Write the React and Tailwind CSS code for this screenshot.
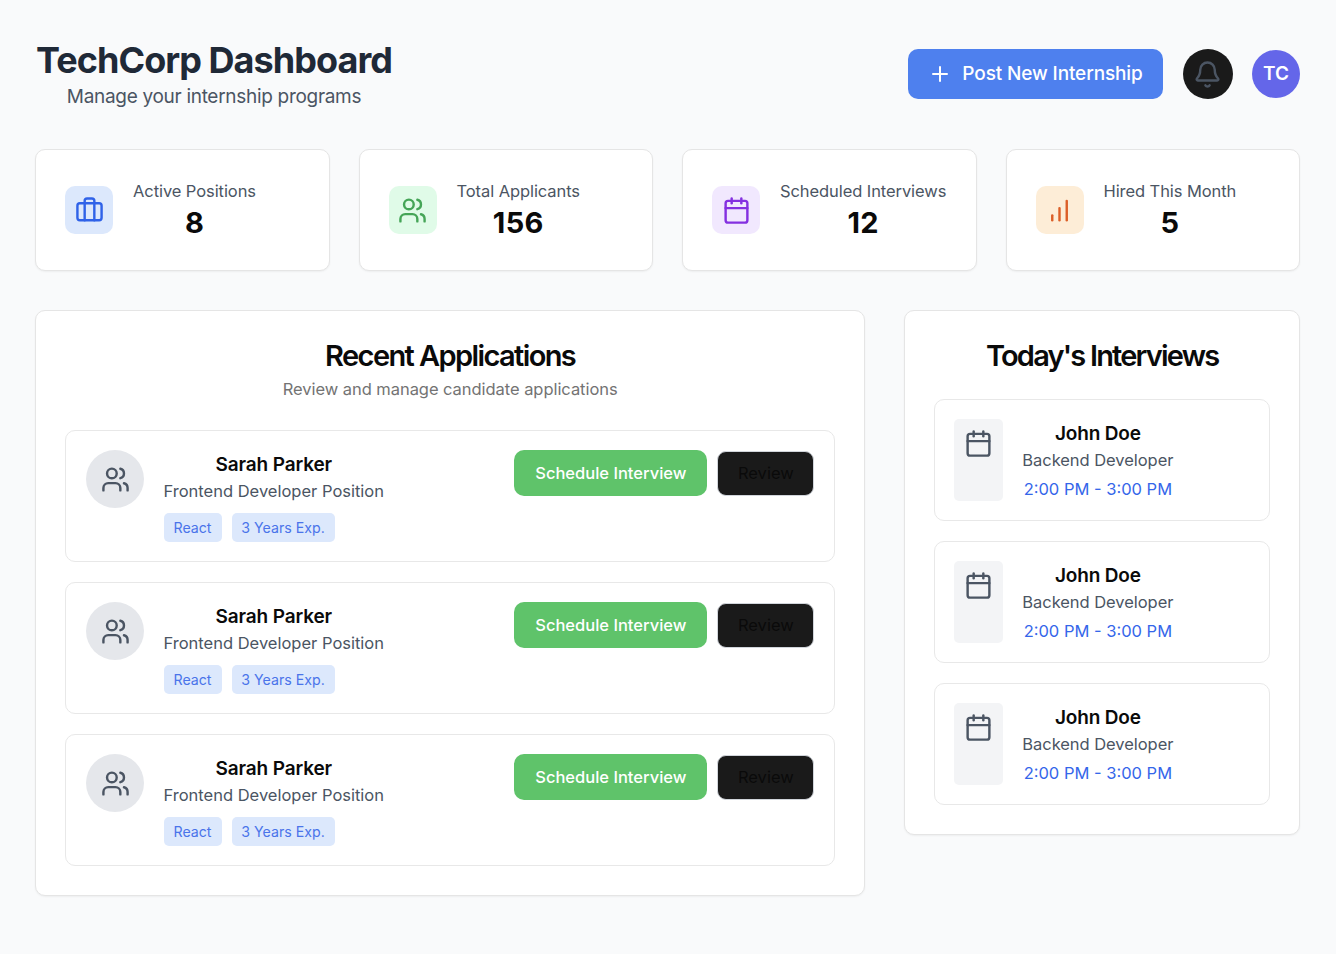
const base = {
  viewBox: '0 0 24 24',
  fill: 'none',
  stroke: 'currentColor',
  strokeWidth: 2,
  strokeLinecap: 'round',
  strokeLinejoin: 'round',
};

const Icon = ({ className, children }) => (
  <svg {...base} className={`shrink-0 ${className}`}>{children}</svg>
);

const Briefcase = (p) => (
  <Icon {...p}>
    <path d="M16 20V4a2 2 0 0 0-2-2h-4a2 2 0 0 0-2 2v16" />
    <rect width="20" height="14" x="2" y="6" rx="2" />
  </Icon>
);
const Users = (p) => (
  <Icon {...p}>
    <path d="M16 21v-2a4 4 0 0 0-4-4H6a4 4 0 0 0-4 4v2" />
    <circle cx="9" cy="7" r="4" />
    <path d="M22 21v-2a4 4 0 0 0-3-3.87" />
    <path d="M16 3.13a4 4 0 0 1 0 7.75" />
  </Icon>
);
const Calendar = (p) => (
  <Icon {...p}>
    <path d="M8 2v4" />
    <path d="M16 2v4" />
    <rect width="18" height="18" x="3" y="4" rx="2" />
    <path d="M3 10h18" />
  </Icon>
);
const Bars = (p) => (
  <Icon {...p}>
    <path d="M12 20V10" />
    <path d="M18 20V4" />
    <path d="M6 20v-4" />
  </Icon>
);
const Bell = (p) => (
  <Icon {...p}>
    <path d="M10.268 21a2 2 0 0 0 3.464 0" />
    <path d="M3.262 15.326A1 1 0 0 0 4 17h16a1 1 0 0 0 .74-1.673C19.41 13.956 18 12.499 18 8A6 6 0 0 0 6 8c0 4.499-1.411 5.956-2.738 7.326" />
  </Icon>
);
const Plus = (p) => (
  <Icon {...p}>
    <path d="M5 12h14" />
    <path d="M12 5v14" />
  </Icon>
);

const stats = [
  { label: 'Active Positions', value: '8', icon: Briefcase, box: 'bg-[#dce8fc] text-[#2f62e8]' },
  { label: 'Total Applicants', value: '156', icon: Users, box: 'bg-[#e0fbe8] text-[#45a557]' },
  { label: 'Scheduled Interviews', value: '12', icon: Calendar, box: 'bg-[#f1e8fe] text-[#8430e0]' },
  { label: 'Hired This Month', value: '5', icon: Bars, box: 'bg-[#fdedd7] text-[#dc5f28]' },
];

function StatCard({ label, value, icon: Glyph, box }) {
  return (
    <div className="flex h-[122px] items-center gap-[20px] rounded-[10px] border border-[#e5e5e5] bg-white px-[29px] shadow-xs">
      <div className={`flex size-[48px] shrink-0 items-center justify-center rounded-[10px] ${box}`}>
        <Glyph className="size-[29px]" />
      </div>
      <div className="text-center whitespace-nowrap">
        <p className="text-[16.5px] leading-[24px] tracking-[-0.08px] text-[#4b5563]">{label}</p>
        <p className="text-[29px] leading-[39px] font-bold tracking-[0.3px] text-[#0a0a0a]">{value}</p>
      </div>
    </div>
  );
}

function Application() {
  return (
    <div className="flex h-[132px] items-start gap-[19.5px] rounded-[10px] border border-[#e8e8e8] px-[20px] pt-[19px]">
      <div className="flex size-[58px] shrink-0 items-center justify-center rounded-full bg-[#e5e7eb] text-[#4b5563]">
        <Users className="size-[29px]" />
      </div>
      <div className="text-center whitespace-nowrap">
        <h3 className="pt-px text-[19px] leading-[28px] font-semibold tracking-[-0.12px] text-[#0a0a0a]">Sarah Parker</h3>
        <p className="text-[16.5px] leading-[24px] text-[#4b5563]">Frontend Developer Position</p>
        <div className="mt-[10px] flex gap-[10px] text-[14.2px] leading-[19px] text-[#4a74ea]">
          <span className="w-[58px] rounded-[5px] bg-[#dce8fc] py-[5px]">React</span>
          <span className="w-[103px] rounded-[5px] bg-[#dce8fc] py-[5px]">3 Years Exp.</span>
        </div>
      </div>
      <div className="ml-auto flex items-center gap-[10px] text-[16.5px] whitespace-nowrap">
        <button className="h-[46px] w-[193px] rounded-[10px] bg-[#5fc36a] font-medium text-white">Schedule Interview</button>
        <button className="h-[45px] w-[97px] rounded-[9px] border border-[#d1d5db] bg-[#1a1a1a] text-[#0a0a0a]">Review</button>
      </div>
    </div>
  );
}

function Interview() {
  return (
    <div className="flex h-[122px] gap-[19px] rounded-[10px] border border-[#e8e8e8] p-[19px]">
      <div className="h-[82px] w-[49px] shrink-0 rounded-[5px] bg-[#f3f4f6] px-[10px] pt-[10px] text-[#4b5563]">
        <Calendar className="size-[29px]" />
      </div>
      <div className="text-center whitespace-nowrap">
        <h3 className="pt-px text-[19px] leading-[28px] font-semibold tracking-[-0.15px] text-[#0a0a0a]">John Doe</h3>
        <p className="text-[16.5px] leading-[24px] tracking-[-0.05px] text-[#4b5563]">Backend Developer</p>
        <p className="mt-[5px] text-[16.5px] leading-[24px] text-[#3566ea]">2:00 PM - 3:00 PM</p>
      </div>
    </div>
  );
}

export default function App() {
  return (
    <div className="min-h-[954px] w-[1336px] bg-[#f9fafb] pt-[39px] pr-[36px] pl-[35px] font-[Inter,'Liberation_Sans',sans-serif]">
      <header className="flex h-[70px] items-center justify-between">
        <div className="pl-px text-center whitespace-nowrap">
          <h1 className="text-[36px] leading-[44px] font-bold tracking-[-0.95px] text-[#1f2937]">TechCorp Dashboard</h1>
          <p className="pt-px text-[19px] leading-[27px] tracking-[-0.3px] text-[#4b5563]">Manage your internship programs</p>
        </div>
        <div className="flex items-center gap-[19.5px]">
          <button className="flex h-[50px] w-[255px] items-center justify-center gap-[10px] rounded-[10px] bg-[#4e80ee] text-[19px] font-medium tracking-[-0.12px] whitespace-nowrap text-white">
            <Plus className="size-[24px]" />
            <span className="pt-px">Post New Internship</span>
          </button>
          <button className="flex size-[50px] items-center justify-center rounded-full bg-[#1a1a1a] text-[#4b5563]">
            <Bell className="size-[29px]" />
          </button>
          <div className="flex size-[48px] items-center justify-center rounded-full bg-[#6466e9] text-[19px] font-semibold text-white">TC</div>
        </div>
      </header>

      <section className="mt-[40px] grid grid-cols-4 gap-[29px]">
        {stats.map((s) => <StatCard key={s.label} {...s} />)}
      </section>

      <main className="mt-[39px] grid grid-cols-3 items-start gap-[39px]">
        <section className="col-span-2 h-[586px] rounded-[10px] border border-[#e5e5e5] bg-white px-[29px] pt-[28px] shadow-xs">
          <h2 className="text-center text-[29px] leading-[33px] font-semibold tracking-[-1.6px] text-[#0a0a0a]">Recent Applications</h2>
          <p className="mt-[5px] text-center text-[16.5px] leading-[24px] tracking-[-0.05px] text-[#737373]">Review and manage candidate applications</p>
          <div className="mt-[29px] flex flex-col gap-[20px]">
            <Application />
            <Application />
            <Application />
          </div>
        </section>
        <section className="h-[525px] rounded-[10px] border border-[#e5e5e5] bg-white px-[29px] pt-[28px] shadow-xs">
          <h2 className="text-center text-[29px] leading-[33px] font-semibold tracking-[-1.8px] text-[#0a0a0a]">Today's Interviews</h2>
          <div className="mt-[27px] flex flex-col gap-[20px]">
            <Interview />
            <Interview />
            <Interview />
          </div>
        </section>
      </main>
    </div>
  );
}
